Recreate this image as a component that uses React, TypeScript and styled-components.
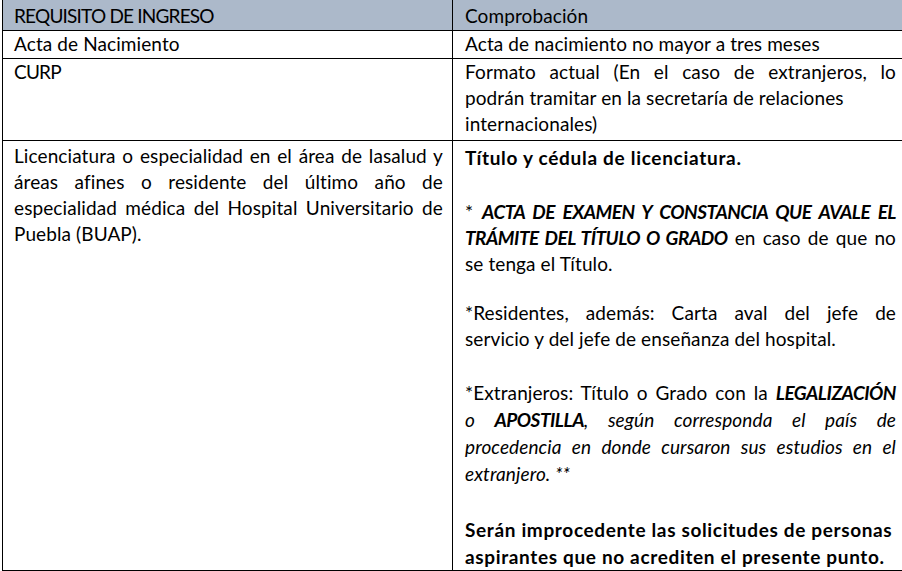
import React from "react";
import styled, { createGlobalStyle } from "styled-components";

const GlobalStyle = createGlobalStyle`
  html, body {
    margin: 0;
    padding: 0;
    background: #ffffff;
    overflow: hidden;
  }
  body {
    font-family: Lato, "Noto Sans", sans-serif;
    color: #000000;
  }
`;

const Table = styled.div`
  margin-left: 2px;
  width: 902px;
  border-left: 1px solid #000;
  font-size: 19px;
  line-height: 26px;
  letter-spacing: 0.1px;
`;

const Row = styled.div<{ $head?: boolean; $height?: number }>`
  display: grid;
  grid-template-columns: 450px 1fr;
  border-bottom: 1px solid #000;
  background: ${(p) => (p.$head ? "#acb9ca" : "#ffffff")};
  min-height: ${(p) => (p.$height ? `${p.$height}px` : "auto")};
`;

const Cell = styled.div<{ $right?: boolean; $top?: number }>`
  padding: ${(p) => p.$top ?? 0}px 9px 0 ${(p) => (p.$right ? 12 : 11)}px;
  border-right: ${(p) => (p.$right ? "none" : "1px solid #000")};
`;

const Caps = styled.span`
  letter-spacing: -0.8px;
`;

const Line = styled.div<{ $justify?: boolean }>`
  text-align: left;
  text-align-last: ${(p) => (p.$justify ? "justify" : "left")};
  white-space: nowrap;
`;

const Para = styled.div<{ $gap?: number; $lh?: number }>`
  margin-top: ${(p) => p.$gap ?? 0}px;
  line-height: ${(p) => (p.$lh ? `${p.$lh}px` : "inherit")};
`;

const Strong = styled.span`
  font-weight: 700;
  letter-spacing: 0.7px;
`;

const StrongItalic = styled.span`
  font-weight: 700;
  font-style: italic;
  letter-spacing: -0.5px;
`;

const Italic = styled.span`
  font-style: italic;
`;

const Notice = styled(Para)`
  font-weight: 700;
  letter-spacing: 0.65px;
`;

export default function App() {
  return (
    <>
      <GlobalStyle />
      <Table>
        <Row $head $height={30}>
          <Cell $top={3}>
            <Caps>REQUISITO DE INGRESO</Caps>
          </Cell>
          <Cell $right $top={3}>
            Comprobación
          </Cell>
        </Row>
        <Row $height={27}>
          <Cell $top={0}>Acta de Nacimiento</Cell>
          <Cell $right $top={0}>
            Acta de nacimiento no mayor a tres meses
          </Cell>
        </Row>
        <Row $height={81}>
          <Cell $top={0}>
            <Caps>CURP</Caps>
          </Cell>
          <Cell $right $top={0}>
            <Line $justify>Formato actual (En el caso de extranjeros, lo</Line>
            <Line>podrán tramitar en la secretaría de relaciones</Line>
            <Line>internacionales)</Line>
          </Cell>
        </Row>
        <Row $height={428}>
          <Cell $top={2}>
            <Line $justify>Licenciatura o especialidad en el área de lasalud y</Line>
            <Line $justify>áreas afines o residente del último año de</Line>
            <Line $justify>especialidad médica del Hospital Universitario de</Line>
            <Line>Puebla (BUAP).</Line>
          </Cell>
          <Cell $right $top={4}>
            <Para>
              <Line>
                <Strong>Título y cédula de licenciatura.</Strong>
              </Line>
            </Para>
            <Para $gap={28}>
              <Line $justify>
                * <StrongItalic>ACTA DE EXAMEN Y CONSTANCIA QUE AVALE EL</StrongItalic>
              </Line>
              <Line $justify>
                <StrongItalic>TRÁMITE DEL TÍTULO O GRADO</StrongItalic> en caso de que no
              </Line>
              <Line>se tenga el Título.</Line>
            </Para>
            <Para $gap={23}>
              <Line $justify>*Residentes, además: Carta aval del jefe de</Line>
              <Line>servicio y del jefe de enseñanza del hospital.</Line>
            </Para>
            <Para $gap={27} $lh={27}>
              <Line $justify>
                *Extranjeros: Título o Grado con la <StrongItalic>LEGALIZACIÓN</StrongItalic>
              </Line>
              <Line $justify>
                <Italic>o </Italic>
                <StrongItalic>APOSTILLA</StrongItalic>
                <Italic>, según corresponda el país de</Italic>
              </Line>
              <Line $justify>
                <Italic>procedencia en donde cursaron sus estudios en el</Italic>
              </Line>
              <Line>
                <Italic>extranjero. **</Italic>
              </Line>
            </Para>
            <Notice $gap={29} $lh={27}>
              <Line>Serán improcedente las solicitudes de personas</Line>
              <Line>aspirantes que no acrediten el presente punto.</Line>
            </Notice>
          </Cell>
        </Row>
      </Table>
    </>
  );
}
